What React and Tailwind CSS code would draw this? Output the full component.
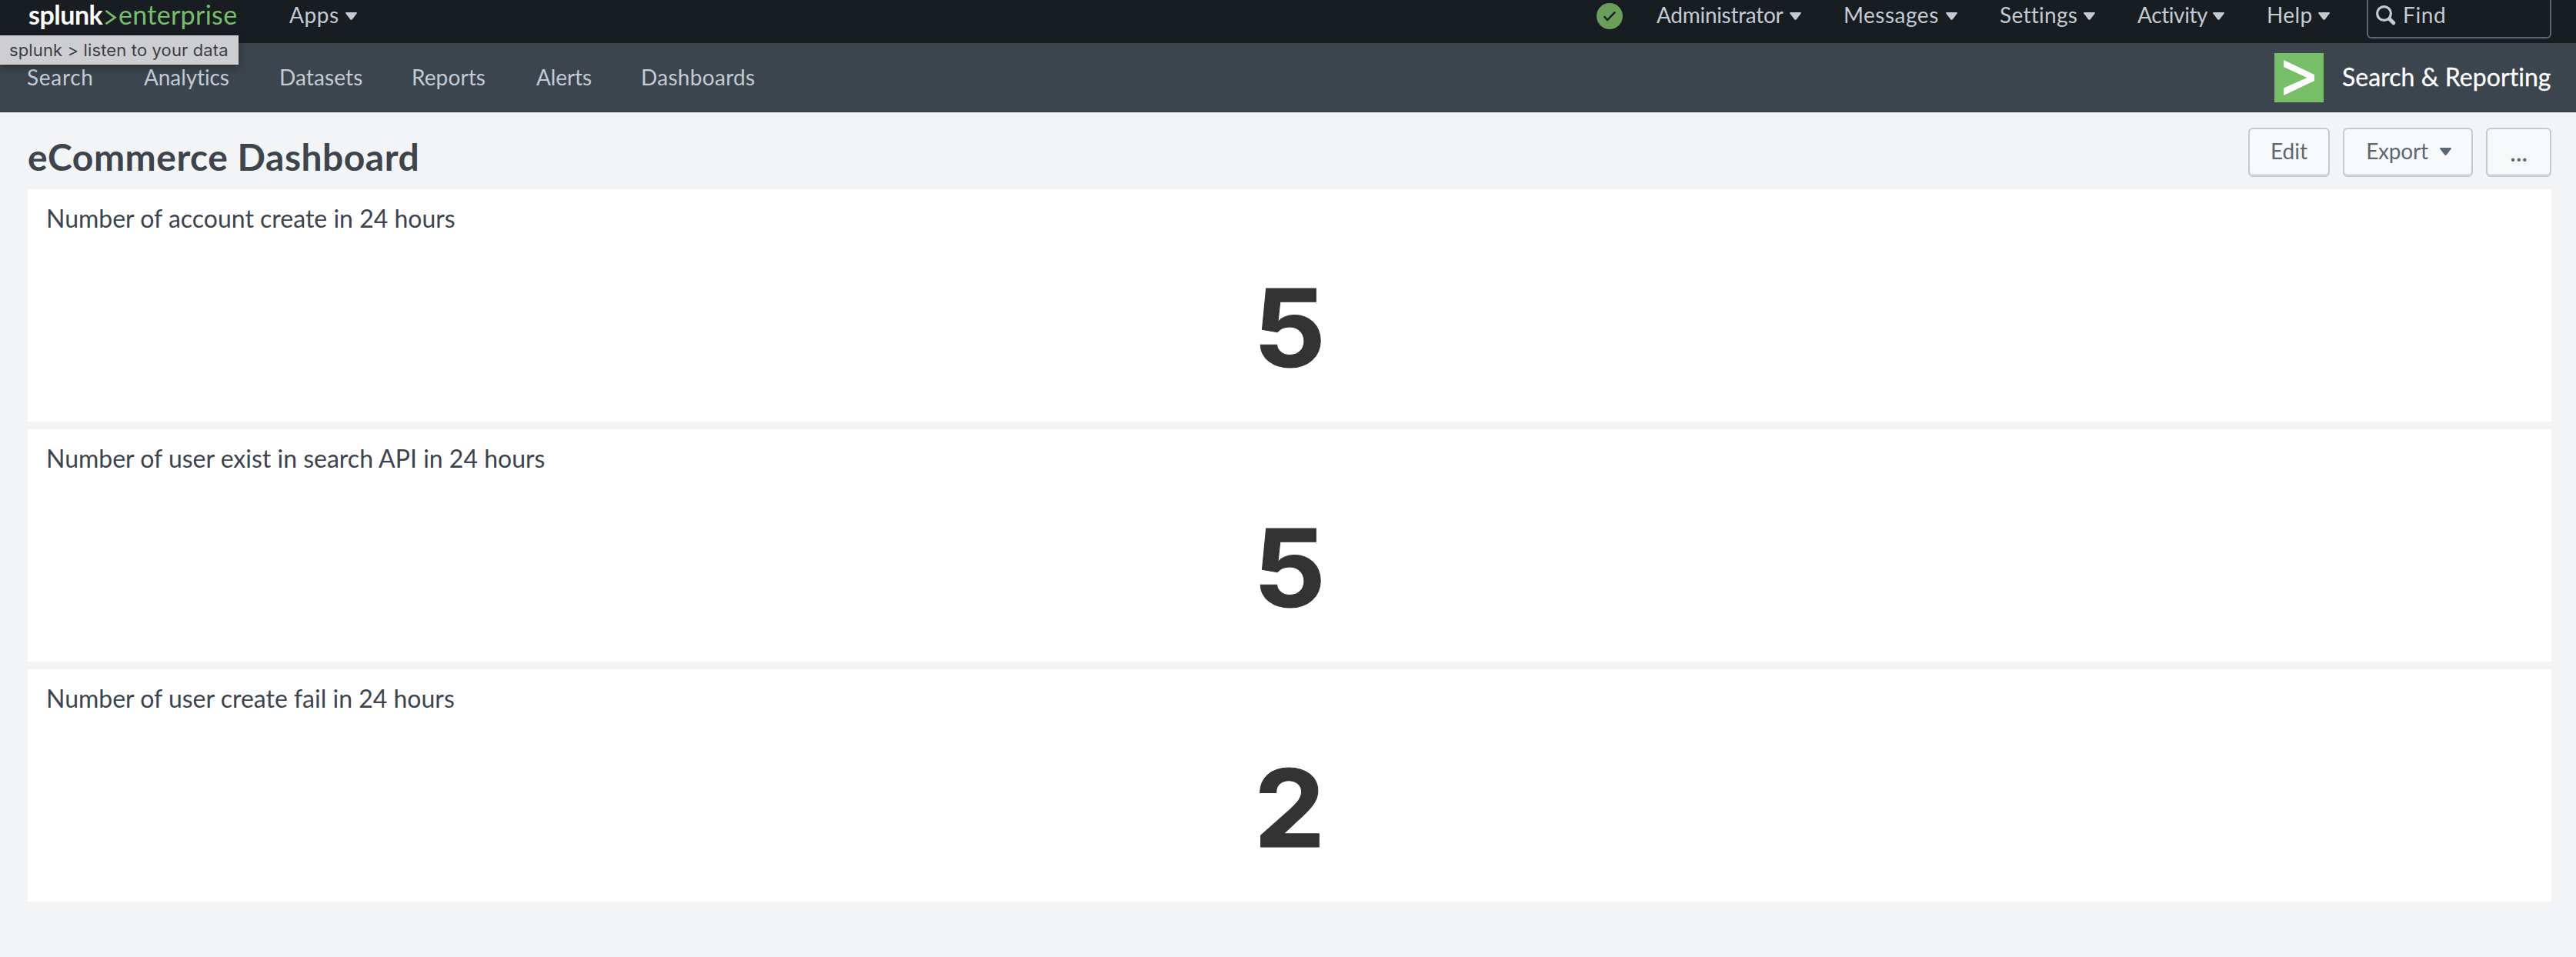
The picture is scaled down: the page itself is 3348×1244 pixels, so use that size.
import React from 'react';

function Caret({ className = '' }) {
  return (
    <svg viewBox="0 0 14 10" className={`h-[10px] w-[15px] shrink-0 fill-current ${className}`} preserveAspectRatio="none">
      <path d="M1 0h12q1.400 .2 .7 1.500L8.200 9.200q-1.200 1.300-2.400 0L.3 1.500Q-.4.2 1 0Z" />
    </svg>
  );
}

const navItems = [
  { label: 'Search', className: 'w-[152px] tracking-[0.7px]' },
  { label: 'Analytics', className: 'w-[176px] tracking-[-0.1px]' },
  { label: 'Datasets', className: 'w-[172px] tracking-[0.1px]' },
  { label: 'Reports', className: 'w-[162px] tracking-[0.1px]' },
  { label: 'Alerts', className: 'w-[136px] tracking-[-0.1px]' },
  { label: 'Dashboards', className: 'tracking-[0.3px]' },
];

const menus = [
  { label: 'Administrator', box: 'w-[243px]', text: 'w-[173px] tracking-[-0.3px]' },
  { label: 'Messages', box: 'w-[203px]', text: 'w-[133px] tracking-[0.5px]' },
  { label: 'Settings', box: 'w-[179px]', text: 'w-[109px] tracking-[0.3px]' },
  { label: 'Activity', box: 'w-[168px]', text: 'w-[98px] tracking-[-0.4px]' },
  { label: 'Help', box: 'w-[130px]', text: 'w-[67px] tracking-[0.4px]' },
];

const panels = [
  { title: 'Number of account create in 24 hours', value: 5 },
  { title: 'Number of user exist in search API in 24 hours', value: 5 },
  { title: 'Number of user create fail in 24 hours', value: 2 },
];

function TopBar() {
  return (
    <header className="relative flex h-[56px] items-start bg-[#171d21] pl-[37px] pr-[32px] text-[28px] leading-[39px] text-[#c3cbd4]">
      <div className="flex w-[339px] text-[34px] leading-[38px]">
        <span className="w-[99px] font-bold tracking-[-0.5px] text-white">splunk</span>
        <svg viewBox="0 0 16 24" className="mt-[11px] h-[24px] w-[16px] shrink-0 fill-none stroke-[#77be68]">
          <path d="M1.500 3 13.500 11.800 1.500 20.200" strokeWidth="2.700" />
        </svg>
        <span className="ml-[2px] tracking-[0.3px] text-[#77be68]">enterprise</span>
      </div>
      <div className="flex">
        <span className="w-[73px] tracking-[0.6px]">Apps</span>
        <Caret className="mt-[16px]" />
      </div>
      <div className="ml-auto flex">
        <svg viewBox="0 0 34 34" className="mr-[44px] mt-[4px] h-[34px] w-[34px]">
          <circle cx="17" cy="17" r="17" fill="#699f5a" />
          <path d="M9.800 17.200 14 22 24.200 11.600" fill="none" stroke="#171d21" strokeWidth="2.400" />
        </svg>
        {menus.map((m) => (
          <div key={m.label} className={`flex ${m.box}`}>
            <span className={`shrink-0 ${m.text}`}>{m.label}</span>
            <Caret className="mt-[16px]" />
          </div>
        ))}
        <div className="flex h-[50px] w-[240px] rounded-b-[6px] border-2 border-t-0 border-[#5c6773] pl-[10px]">
          <svg viewBox="0 0 26 26" className="mt-[7px] h-[26px] w-[26px] fill-none stroke-[#c3cbd4]">
            <circle cx="10.500" cy="10.500" r="8.900" strokeWidth="3.200" />
            <path d="m18 18 4.800 4.800" strokeWidth="5" strokeLinecap="round" />
            <path d="m16.500 16.500 4 4" strokeWidth="3.200" />
          </svg>
          <span className="ml-[9px] tracking-[0.6px]">Find</span>
        </div>
      </div>
      <div className="absolute left-0 top-[46px] z-10 h-[38px] w-[310px] whitespace-nowrap border border-l-0 border-[#d8d8da] bg-[#cdced1] pl-[12px] font-[Inter,sans-serif] text-[22px] leading-[36px] tracking-[0.13px] text-[#3e3e40] shadow-[0_3px_10px_rgba(0,0,0,0.35)]">
        splunk &gt; listen to your data
      </div>
    </header>
  );
}

function AppNav() {
  return (
    <nav className="flex h-[90px] items-start border-b border-[#33383f] bg-[#3c444d] pl-[35px] pr-[32px] pt-[24px] text-[28px] leading-[40px] text-[#c3cbd4]">
      {navItems.map((n) => (
        <span key={n.label} className={n.className}>{n.label}</span>
      ))}
      <div className="-mt-[11px] ml-auto flex text-white">
        <svg viewBox="0 0 64 64" className="h-[64px] w-[64px]">
          <path d="M0 0h64v64H0z" fill="#77be68" />
          <path d="M12 9 52 28v8L12 55v-9.500L42.500 32 12 18Z" fill="#fff" />
        </svg>
        <span className="ml-[24px] w-[272px] whitespace-nowrap text-[32px] leading-[62px] tracking-[0.05px] [-webkit-text-stroke:0.3px_#fff]">Search &amp; Reporting</span>
      </div>
    </nav>
  );
}

const buttonClass =
  'flex h-[64px] justify-center rounded-[6px] border-2 border-[#c3cbd4] bg-[#f7f8fa] text-[28px] leading-[56px] text-[#5c6773] shadow-[inset_0_-2px_0_#dde1e3]';

export default function App() {
  return (
    <div className="h-[1244px] w-[3348px] overflow-hidden bg-[#f2f4f5] font-[Lato,sans-serif] [font-variant-ligatures:no-common-ligatures]">
      <TopBar />
      <AppNav />
      <main className="px-[36px]">
        <div className="flex h-[100px] items-start justify-between">
          <h1 className="mt-[28px] text-[48px] font-bold leading-[60px] tracking-[0.5px] text-[#3c444d]">eCommerce Dashboard</h1>
          <div className="-mr-[4px] mt-[20px] flex">
            <button className={`w-[106px] ${buttonClass}`}>Edit</button>
            <button className={`ml-[17px] w-[169px] ${buttonClass}`}>
              <span className="ml-[2px] tracking-[-0.2px]">Export</span>
              <Caret className="ml-[15px] mt-[24px]" />
            </button>
            <button className={`ml-[17px] w-[85px] ${buttonClass}`}>
              <span className="text-[34px] leading-[57px] tracking-[-0.3px]">...</span>
            </button>
          </div>
        </div>
        <div className="-mr-[4px] flex flex-col gap-[10px]">
          {panels.map((p) => (
            <section key={p.title} className="h-[302px] bg-white px-[24px] pt-[17px]">
              <h2 className="text-[32px] leading-[41px] text-[#3c444d]">{p.title}</h2>
              <div className="scale-x-[1.05] pt-[42px] text-center font-[Inter,sans-serif] text-[140px] font-bold leading-[160px] text-[#333] [-webkit-text-stroke:1px_#333]">{p.value}</div>
            </section>
          ))}
        </div>
      </main>
    </div>
  );
}
